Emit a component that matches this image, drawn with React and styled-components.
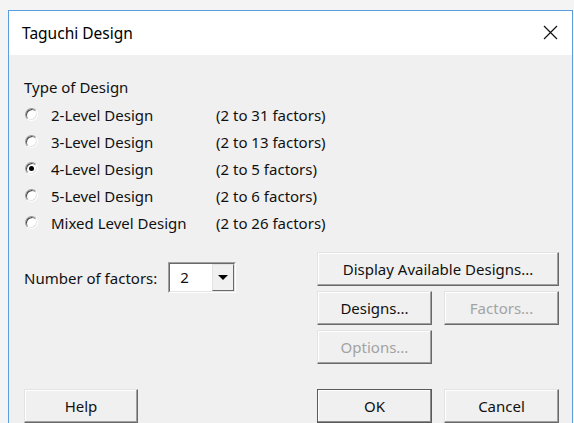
import React, { useState } from "react";
import styled, { createGlobalStyle, css } from "styled-components";

const GlobalStyle = createGlobalStyle`
  html, body {
    margin: 0;
    padding: 0;
    background: #f4f4f4;
    overflow: hidden;
  }
  body {
    font-family: "Noto Sans", "Liberation Sans", sans-serif;
    font-size: 15px;
    color: #111;
  }
`;

const designs = [
  { id: "2", label: "2-Level Design", range: "(2 to 31 factors)" },
  { id: "3", label: "3-Level Design", range: "(2 to 13 factors)" },
  { id: "4", label: "4-Level Design", range: "(2 to 5 factors)" },
  { id: "5", label: "5-Level Design", range: "(2 to 6 factors)" },
  { id: "mixed", label: "Mixed Level Design", range: "(2 to 26 factors)" },
];

const Window = styled.div`
  margin: 10px 0 0 8px;
  width: 565px;
  height: 413px;
  overflow: hidden;
  box-sizing: border-box;
  border: 1px solid #5a9ee0;
  border-bottom: none;
  background: #f0f0f0;
  display: flex;
  flex-direction: column;
`;

const TitleBar = styled.div`
  height: 44px;
  flex-shrink: 0;
  background: #fff;
  display: flex;
  align-items: center;
  justify-content: space-between;
  padding: 0 14px 0 13px;
`;

const Title = styled.span`
  font-size: 15.5px;
  color: #000;
`;

const CloseIcon = styled.svg`
  width: 15px;
  height: 15px;
  margin-top: -2px;
`;

const Body = styled.div`
  padding: 19px 13px 0 15px;
  display: flex;
  flex-direction: column;
`;

const GroupLabel = styled.div`
  height: 27px;
  line-height: 27px;
`;

const RadioGrid = styled.div`
  display: grid;
  grid-template-columns: 192px auto;
  grid-auto-rows: 27px;
  align-items: center;
`;

const RadioLabel = styled.label`
  display: flex;
  align-items: center;
  gap: 13px;
  padding-left: 1px;
  cursor: default;
`;

/* classic sunken radio: grey/dark arcs top-left, white bottom-right */
const RadioDot = styled.span`
  flex-shrink: 0;
  width: 13px;
  height: 13px;
  box-sizing: border-box;
  border-radius: 50%;
  background: #fff;
  border: 1px solid;
  border-color: #9a9a9a #fff #fff #9a9a9a;
  box-shadow: inset 1px 1px 0 #4a4a4a, inset -1px -1px 0 #e3e3e3;
  display: flex;
  align-items: center;
  justify-content: center;

  &::after {
    content: "";
    width: 5px;
    height: 5px;
    border-radius: 50%;
    background: #000;
    display: ${(p) => (p.$checked ? "block" : "none")};
  }
`;

const Lower = styled.div`
  margin-top: 16px;
  display: grid;
  grid-template-columns: 293px 242px;
`;

const FactorRow = styled.div`
  display: flex;
  align-items: center;
  gap: 11px;
  align-self: start;
  margin-top: 10px;
`;

const Select = styled.div`
  width: 68px;
  height: 31px;
  box-sizing: border-box;
  border: 1px solid;
  border-color: #a0a0a0 #fff #fff #a0a0a0;
  display: flex;
`;

const SelectInner = styled.div`
  flex: 1;
  display: flex;
  border: 1px solid;
  border-color: #696969 #e3e3e3 #e3e3e3 #696969;
  background: #fff;
`;

const SelectValue = styled.span`
  flex: 1;
  padding-left: 10px;
  line-height: 27px;
`;

const SelectArrow = styled.span`
  width: 22px;
  box-sizing: border-box;
  background: #f0f0f0;
  border: 1px solid;
  border-color: #e3e3e3 #696969 #696969 #e3e3e3;
  display: flex;
  align-items: center;
  justify-content: center;

  &::after {
    content: "";
    border-left: 5px solid transparent;
    border-right: 5px solid transparent;
    border-top: 5px solid #000;
  }
`;

const ButtonGrid = styled.div`
  display: grid;
  grid-template-columns: 115px 115px;
  grid-auto-rows: 34px;
  column-gap: 12px;
  row-gap: 5px;
`;

const Button = styled.button`
  font: inherit;
  color: ${(p) => (p.disabled ? "#a3a3a3" : "#111")};
  background: #f0f0f0;
  height: 34px;
  padding: 0;
  border: 1px solid;
  border-color: #e3e3e3 #696969 #696969 #e3e3e3;
  box-shadow: inset -1px -1px 0 #a0a0a0, inset 1px 1px 0 #fff;
  grid-column: ${(p) => (p.$wide ? "1 / span 2" : "auto")};
  width: ${(p) => (p.$width ? `${p.$width}px` : "auto")};

  ${(p) =>
    p.$default &&
    css`
      border-color: #5a5a5a;
      box-shadow: inset -1px -1px 0 #8a8a8a, inset 1px 1px 0 #fff;
    `}
`;

const Footer = styled.div`
  margin-top: 25px;
  display: grid;
  grid-template-columns: 281px 115px 115px;
  column-gap: 12px;
  align-items: start;
`;

function CloseGlyph() {
  return (
    <CloseIcon viewBox="0 0 15 15">
      <path d="M1 1 L14 14 M14 1 L1 14" stroke="#111" strokeWidth="1.2" fill="none" />
    </CloseIcon>
  );
}

export default function App() {
  const [design, setDesign] = useState("4");

  return (
    <>
      <GlobalStyle />
      <Window>
        <TitleBar>
          <Title>Taguchi Design</Title>
          <CloseGlyph />
        </TitleBar>
        <Body>
          <GroupLabel>Type of Design</GroupLabel>
          <RadioGrid>
            {designs.map((d) => (
              <React.Fragment key={d.id}>
                <RadioLabel onClick={() => setDesign(d.id)}>
                  <RadioDot $checked={design === d.id} />
                  {d.label}
                </RadioLabel>
                <span>{d.range}</span>
              </React.Fragment>
            ))}
          </RadioGrid>

          <Lower>
            <FactorRow>
              Number of factors:
              <Select>
                <SelectInner>
                  <SelectValue>2</SelectValue>
                  <SelectArrow />
                </SelectInner>
              </Select>
            </FactorRow>
            <ButtonGrid>
              <Button $wide>Display Available Designs...</Button>
              <Button>Designs...</Button>
              <Button disabled>Factors...</Button>
              <Button disabled>Options...</Button>
            </ButtonGrid>
          </Lower>

          <Footer>
            <Button $width={114}>Help</Button>
            <Button $default>OK</Button>
            <Button>Cancel</Button>
          </Footer>
        </Body>
      </Window>
    </>
  );
}
